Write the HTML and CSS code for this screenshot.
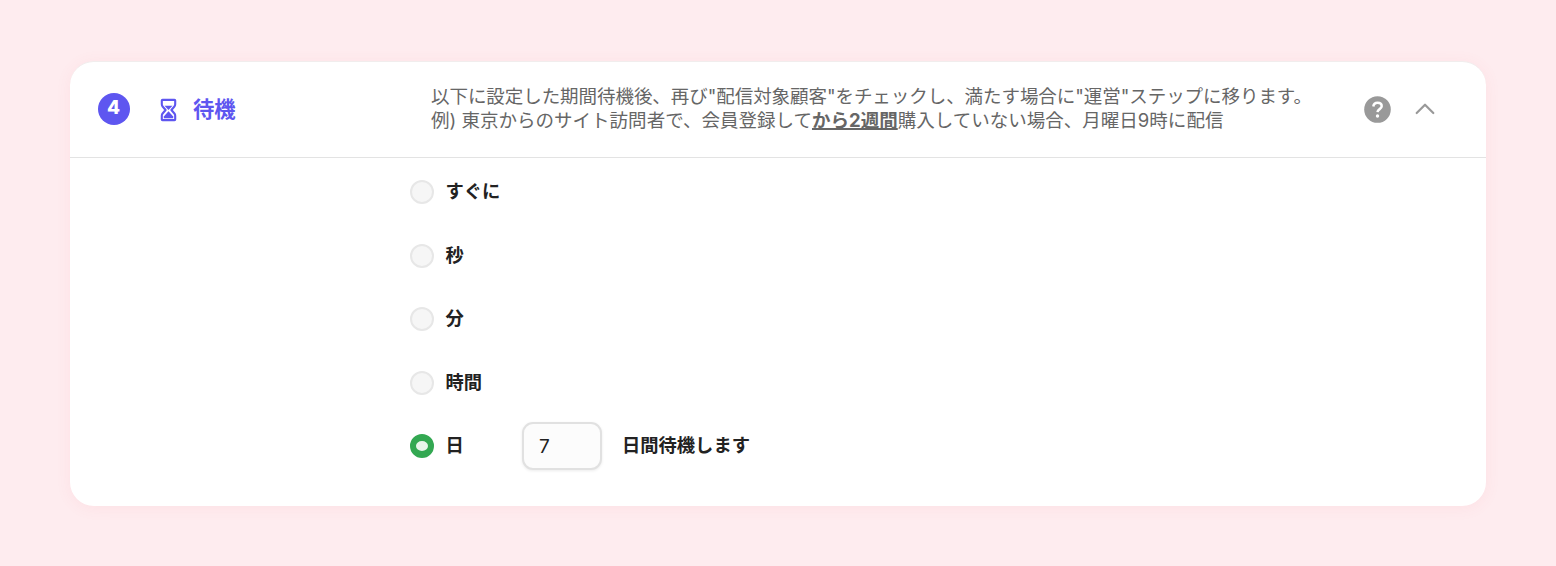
FILE: index.html
```html
<!DOCTYPE html>
<html lang="ja">
<head>
<meta charset="utf-8">
<title>待機</title>
<link rel="stylesheet" href="styles.css">
</head>
<body>
<section class="card">
  <header class="head">
    <span class="step">4</span>
    <svg class="hourglass" width="17" height="24" viewBox="0 0 17 24" fill="none">
      <path d="M2.500 1.900h12q.7 0 .7.7v3.700q0 1.300-.8 2.200L11.400 12l3 3.500q.8.900.8 2.200v3.700q0 .7-.7.7h-12q-.7 0-.7-.7v-3.700q0-1.300.8-2.200l3-3.500-3-3.500q-.8-.9-.8-2.200V2.600q0-.7.7-.7z" stroke="#5e56f0" stroke-width="2.100" stroke-linejoin="round"/>
      <path d="M4.500 7.700h8L8.500 12z" fill="#5e56f0"/>
      <path d="M8.500 13.200l4.700 5.300v1.700H3.800v-1.700z" fill="#5e56f0"/>
    </svg>
    <h2 class="title">待機</h2>
    <div class="desc">
      <p class="line lead">以下に設定した期間待機後、再び"配信対象顧客"をチェックし、満たす場合に"運営"ステップに移ります。</p>
      <p class="line">例) 東京からのサイト訪問者で、会員登録して<b class="mark">から2週間</b>購入していない場合、月曜日9時に配信</p>
    </div>
    <svg class="help" width="27" height="27" viewBox="0 0 27 27" fill="none">
      <circle cx="13.500" cy="13.500" r="13.300" fill="#999"/>
      <path d="M9.300 10.500c.3-2.500 2-3.700 4.300-3.700 2.400 0 4.100 1.400 4.100 3.400 0 2.900-4.100 2.900-4.200 5.900" stroke="#fff" stroke-width="2.500"/>
      <circle cx="13.500" cy="20" r="1.700" fill="#fff"/>
    </svg>
    <svg class="chevron" width="20" height="12" viewBox="0 0 20 12" fill="none">
      <path d="M1.700 10L10 1.700l8.300 8.300" stroke="#999" stroke-width="2.200" stroke-linecap="round" stroke-linejoin="round"/>
    </svg>
  </header>
  <div class="options">
    <label class="option"><span class="radio"></span><span class="name">すぐに</span></label>
    <label class="option"><span class="radio"></span><span class="name">秒</span></label>
    <label class="option"><span class="radio"></span><span class="name">分</span></label>
    <label class="option"><span class="radio"></span><span class="name">時間</span></label>
    <div class="option"><span class="radio on"></span><span class="name day">日</span><span class="field">7</span><span class="name">日間待機します</span></div>
  </div>
</section>
</body>
</html>
```
FILE: styles.css
```css
* { box-sizing: border-box; }
body {
  margin: 0;
  padding: 61px 70px 0;
  height: 566px;
  background: #feecef;
  font-family: Inter, "Noto Sans CJK JP", sans-serif;
  overflow: hidden;
}
.card {
  height: 445px;
  background: #fff;
  border-radius: 24px;
  border-top: 1px solid #f1eded;
  box-shadow: 0 2px 16px rgba(235, 90, 105, .07);
}
.head {
  display: flex;
  align-items: center;
  height: 96px;
  padding: 0 0 1px 27.500px;
  border-bottom: 1.500px solid #e3e3e3;
}
.step {
  width: 32px;
  height: 32px;
  border-radius: 50%;
  background: #5e56f0;
  color: #fff;
  font-size: 19px;
  font-weight: 800;
  line-height: 29px;
  text-align: center;
}
.hourglass { margin: 1px 0 0 30.500px; }
.title {
  margin: 0 0 0 16px;
  width: 238px;
  color: #5e56f0;
  font-size: 21.300px;
  line-height: 30px;
  font-weight: 700;
}
.desc { width: 932.500px; padding-bottom: 3px; color: #666; font-size: 18.520px; }
.line { margin: 0; height: 24px; line-height: 24px; white-space: nowrap; }
.lead { letter-spacing: -.07px; }
.mark { font-weight: 700; text-decoration: underline; text-decoration-thickness: 2px; }
.chevron { margin: 0 0 1px 24px; }
.options { padding: 2.500px 0 0 340px; }
.option { display: flex; align-items: center; height: 63.500px; color: #222; }
.radio {
  width: 24px;
  height: 24px;
  margin-right: 11.500px;
  border: 2px solid #e7e7e7;
  border-radius: 50%;
  background: #f6f6f6;
}
.radio.on { border-color: #33a852; border-width: 7px 6px; background: #e8f5eb; }
.name { padding-bottom: 2px; font-size: 18.300px; font-weight: 700; line-height: 28px; }
.day { width: 76.500px; }
.field {
  width: 80px;
  height: 48px;
  margin-right: 20px;
  padding-left: 15px;
  border: 2px solid #e1e1e1;
  border-radius: 11px;
  background: #fcfcfc;
  box-shadow: 0 1px 3px rgba(0, 0, 0, .08);
  font-size: 19px;
  line-height: 46px;
}
```
